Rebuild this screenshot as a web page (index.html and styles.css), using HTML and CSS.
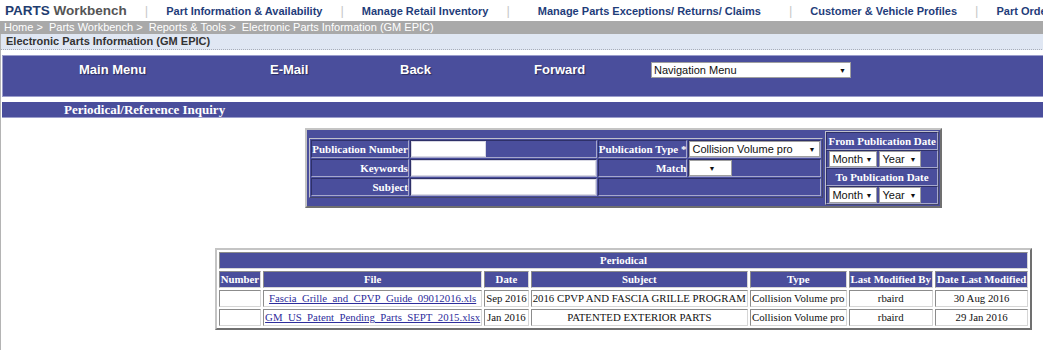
FILE: index.html
```html
<!DOCTYPE html>
<html lang="en">

<head>
    <meta charset="UTF-8">
    <title>Electronic Parts Information (GM EPIC)</title>
    <link rel="stylesheet" href="styles.css">
</head>

<body>
    <div class="topnav">
        <span class="brand"><b class="brand-parts">PARTS</b> Workbench</span>
        <span class="sep">|</span>
        <a class="nav-link" href="#">Part Information &amp; Availability</a>
        <span class="sep">|</span>
        <a class="nav-link" href="#">Manage Retail Inventory</a>
        <span class="sep">|</span>
        <a class="nav-link nav-link-wide" href="#">Manage Parts Exceptions/ Returns/ Claims</a>
        <span class="sep">|</span>
        <a class="nav-link" href="#">Customer &amp; Vehicle Profiles</a>
        <span class="sep">|</span>
        <a class="nav-link" href="#">Part Orders</a>
    </div>
    <div class="crumbs">Home &gt;&nbsp; Parts Workbench &gt;&nbsp; Reports &amp; Tools &gt;&nbsp; Electronic Parts Information (GM EPIC)</div>

    <div class="page">
        <div class="title">Electronic Parts Information (GM EPIC)</div>

        <div class="menubar">
            <span class="menu-item">Main Menu</span>
            <span class="menu-item">E-Mail</span>
            <span class="menu-item">Back</span>
            <span class="menu-item">Forward</span>
            <span class="sel sel-nav">Navigation Menu<i>&#9660;</i></span>
        </div>

        <div class="section">Periodical/Reference Inquiry</div>

        <div class="content">
            <table class="search">
                <tr>
                    <td class="search-main">
                        <table class="fields">
                            <tr>
                                <th>Publication Number</th>
                                <td class="field-input"><span class="inp inp-num"></span></td>
                                <th>Publication Type *</th>
                                <td class="field-input"><span class="sel sel-type">Collision Volume pro<i>&#9660;</i></span></td>
                            </tr>
                            <tr>
                                <th>Keywords</th>
                                <td class="field-input"><span class="inp inp-wide"></span></td>
                                <th>Match</th>
                                <td class="field-input"><span class="sel sel-match"><i>&#9660;</i></span></td>
                            </tr>
                            <tr>
                                <th>Subject</th>
                                <td class="field-input"><span class="inp inp-wide"></span></td>
                                <td colspan="2"></td>
                            </tr>
                        </table>
                    </td>
                    <td class="search-dates">
                        <table class="dates">
                            <tr><th>From Publication Date</th></tr>
                            <tr><td><span class="sel sel-month">Month<i>&#9660;</i></span><span class="sel sel-year">Year<i>&#9660;</i></span></td></tr>
                            <tr><th>To Publication Date</th></tr>
                            <tr><td><span class="sel sel-month">Month<i>&#9660;</i></span><span class="sel sel-year">Year<i>&#9660;</i></span></td></tr>
                        </table>
                    </td>
                </tr>
            </table>

            <table class="results">
                <tr><th colspan="7">Periodical</th></tr>
                <tr>
                    <th>Number</th>
                    <th>File</th>
                    <th>Date</th>
                    <th>Subject</th>
                    <th>Type</th>
                    <th>Last Modified By</th>
                    <th>Date Last Modified</th>
                </tr>
                <tr>
                    <td></td>
                    <td><a href="#">Fascia_Grille_and_CPVP_Guide_09012016.xls</a></td>
                    <td>Sep 2016</td>
                    <td>2016 CPVP AND FASCIA GRILLE PROGRAM</td>
                    <td class="left">Collision Volume pro</td>
                    <td>rbaird</td>
                    <td>30 Aug 2016</td>
                </tr>
                <tr>
                    <td></td>
                    <td><a href="#">GM_US_Patent_Pending_Parts_SEPT_2015.xlsx</a></td>
                    <td>Jan 2016</td>
                    <td>PATENTED EXTERIOR PARTS</td>
                    <td class="left">Collision Volume pro</td>
                    <td>rbaird</td>
                    <td>29 Jan 2016</td>
                </tr>
            </table>
        </div>
    </div>
</body>

</html>
```

FILE: styles.css
```css
* {
    margin: 0;
    padding: 0;
}

html,
body {
    overflow: hidden;
}

body {
    background: #fff;
    font-family: "Liberation Sans", Arial, sans-serif;
    font-size: 11px;
    width: 1246px;
}

/* top navigation */
.topnav {
    height: 21px;
    display: flex;
    align-items: center;
    gap: 18px;
    padding-left: 5px;
    white-space: nowrap;
    font-weight: bold;
    font-size: 11px;
}

.brand {
    color: #555;
    font-size: 13.5px;
}

.brand-parts {
    color: #1f3d70;
}

.sep {
    color: #c8c8c8;
    font-weight: normal;
    font-size: 13px;
}

.nav-link {
    color: #1f3d7a;
    text-decoration: none;
}

.nav-link-wide {
    margin: 0 10px;
}

.crumbs {
    height: 13px;
    line-height: 13px;
    background: #a9a9a9;
    color: #fff;
    padding-left: 4px;
    font-size: 11px;
    white-space: nowrap;
}

/* page body */
.page {
    border-left: 1px solid #b4b4b4;
    min-height: 320px;
}

.title {
    height: 15px;
    line-height: 15px;
    background: #e0e7f3;
    border-bottom: 1px dotted #a8adb8;
    color: #333;
    font-weight: bold;
    padding-left: 5px;
}

.menubar {
    margin: 5px 0 0 1px;
    height: 42px;
    background: #4a4e9c;
    border: 1px solid #9b9dcb;
    border-right: 0;
    display: grid;
    grid-template-columns: 191px 130px 134px 117px auto;
    align-items: start;
    padding: 5px 0 0 76px;
    box-sizing: border-box;
}

.menu-item {
    color: #fff;
    font-size: 13px;
    font-weight: bold;
    line-height: 17px;
    text-shadow: 1px 1px 1px #2a2c5c;
}

.section {
    margin: 5px 0 0 1px;
    height: 16px;
    line-height: 15px;
    background: #4a4e9c;
    border-bottom: 1px solid #9b9dcb;
    box-sizing: border-box;
    color: #fff;
    font-family: "Liberation Serif", "Times New Roman", serif;
    font-size: 13px;
    font-weight: bold;
    padding-left: 62px;
}

/* select look-alikes */
.sel {
    display: inline-flex;
    align-items: center;
    justify-content: space-between;
    box-sizing: border-box;
    height: 16px;
    background: #fff;
    border: 1px solid #a0a0a0;
    color: #111;
    font-family: "Liberation Sans", Arial, sans-serif;
    font-size: 11px;
    padding: 0 4px 0 2px;
    vertical-align: middle;
}

.sel i {
    font-style: normal;
    font-size: 7px;
    color: #111;
}

.sel-nav {
    width: 200px;
    margin-top: 1px;
}

.sel-type {
    width: 131px;
}

.sel-match {
    width: 43px;
    justify-content: flex-end;
    padding-right: 16px;
}

.sel-month {
    width: 48px;
    margin-right: 2px;
}

.sel-year {
    width: 42px;
}

.inp {
    display: inline-block;
    box-sizing: border-box;
    height: 16px;
    background: #fff;
    border: 1px solid #d8d8e4;
    vertical-align: middle;
}

.inp-num {
    width: 75px;
}

.inp-wide {
    width: 185px;
}

/* search form */
.content {
    padding-top: 10px;
}

.search {
    margin: 0 auto;
    background: #4a4e9c;
    border: 2px outset #c4c4c4;
    border-spacing: 1px;
}

.search-main {
    vertical-align: middle;
    padding: 1px;
}

.search-dates {
    vertical-align: middle;
    padding: 0;
}

.fields,
.dates {
    border: 1px solid;
    border-color: #c0c0cc #44466a #44466a #c0c0cc;
    border-spacing: 1px;
}

.dates {
    border-spacing: 0;
}

.fields th,
.fields td,
.dates th,
.dates td {
    border: 1px solid;
    border-color: #2e3068 #a6a8cc #a6a8cc #2e3068;
    height: 16px;
    padding: 0;
}

.fields th,
.dates th {
    color: #fff;
    font-family: "Liberation Serif", "Times New Roman", serif;
    font-size: 11px;
    font-weight: bold;
    text-align: right;
    white-space: nowrap;
}

.dates th {
    text-align: center;
    padding: 0 1px;
}

.dates td {
    text-align: left;
    padding-left: 2px;
    font-size: 0;
}

.field-input {
    text-align: left;
    font-size: 0;
}

.fields .field-input .sel,
.dates .sel {
    font-size: 11px;
}

/* results table */
.results {
    margin: 40px auto 0;
    border: 2px outset #c4c4c4;
    border-spacing: 2px;
    font-family: "Liberation Serif", "Times New Roman", serif;
    font-size: 10.8px;
}

.results th,
.results td {
    line-height: 13px;
    padding: 1px;
    border: 1px solid;
    border-color: #8c8c8c #d6d6d6 #d6d6d6 #8c8c8c;
    white-space: nowrap;
}

.results th {
    background: #4a4e9c;
    color: #fff;
    font-weight: bold;
}

.results td {
    background: #fff;
    color: #111;
    text-align: center;
}

.results td.left {
    text-align: left;
}

.results a {
    color: #2d2d9c;
}
```
